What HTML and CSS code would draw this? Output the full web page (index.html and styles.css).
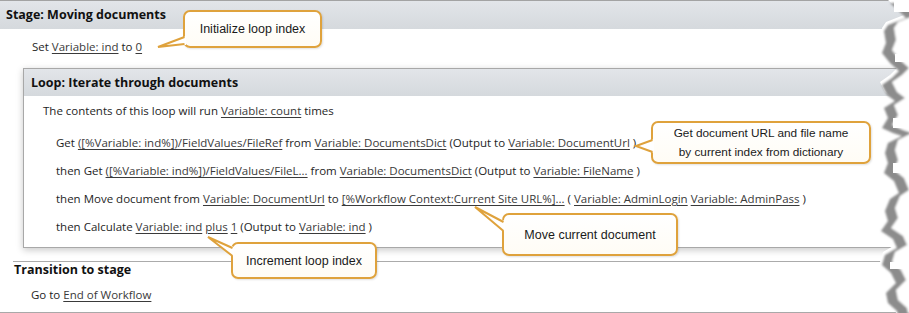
FILE: index.html
```html
<!DOCTYPE html>
<html lang="en">
<head>
    <meta charset="UTF-8">
    <title>Stage: Moving documents</title>
    <link rel="stylesheet" href="styles.css">
</head>
<body>
    <div class="sheet">
        <div class="stage">
            <div class="stage-head">Stage: Moving documents</div>
            <div class="set-row">Set <span class="ref">Variable: ind</span> to <span class="ref">0</span></div>

            <div class="loop">
                <div class="loop-head">Loop: Iterate through documents</div>
                <div class="loop-body">
                    <div class="loop-note">The contents of this loop will run <span class="ref">Variable: count</span> times</div>
                    <div class="step">Get <span class="ref">([%Variable: ind%])/FieldValues/FileRef</span> from <span class="ref">Variable: DocumentsDict</span> (Output to <span class="ref">Variable: DocumentUrl</span> )</div>
                    <div class="step">then Get <span class="ref">([%Variable: ind%])/FieldValues/FileL...</span> from <span class="ref">Variable: DocumentsDict</span> (Output to <span class="ref">Variable: FileName</span> )</div>
                    <div class="step">then Move document from <span class="ref">Variable: DocumentUrl</span> to <span class="ref">[%Workflow Context:Current Site URL%]...</span> ( <span class="ref">Variable: AdminLogin</span> <span class="ref">Variable: AdminPass</span> )</div>
                    <div class="step">then Calculate <span class="ref">Variable: ind</span> <span class="ref">plus</span> <span class="ref">1</span> (Output to <span class="ref">Variable: ind</span> )</div>
                </div>
            </div>

            <div class="transition">
                <div class="trans-head">Transition to stage</div>
                <div class="go-row">Go to <span class="ref">End of Workflow</span></div>
            </div>
        </div>

        <div class="callout callout-init">Initialize loop index</div>
        <div class="callout callout-get">Get document URL and file name<br>by current index from dictionary</div>
        <div class="callout callout-move">Move current document</div>
        <div class="callout callout-inc">Increment loop index</div>

        <!-- callout tails, drawn over the callout borders -->
        <svg class="tails" width="909" height="313" viewBox="0 0 909 313">
            <g fill="#fff" stroke="none">
                <polygon points="186,36 158,47 186,45"/>
                <polygon points="654,139 636,146 654,153"/>
                <polygon points="505,221 475,207 505,232"/>
                <polygon points="234,247 208,237 234,257"/>
            </g>
            <g fill="none" stroke="#dfa23c" stroke-width="2" stroke-linejoin="miter">
                <polyline points="184.5,37 158,47 184.5,44"/>
                <polyline points="652.5,140 636,146 652.5,152"/>
                <polyline points="503.5,222 475,207 503.5,231"/>
                <polyline points="232.5,248 208,237 232.5,256"/>
            </g>
        </svg>

        <!-- torn right edge: white cut, then a gray shadow band along it -->
        <svg class="torn" width="40" height="313" viewBox="869 0 40 313">
            <defs>
                <filter id="soft" x="-50%" y="-10%" width="200%" height="120%">
                    <feGaussianBlur stdDeviation="0.9"/>
                </filter>
                <polygon id="edge" points="888,0 897,8 904,15 886,22 882,28 884,40 880,50 888,60 897,68 890,75 880,82 885,92 893,98 882,105 886,115 880,125 891,130 900,133 886,140 883,150 886,160 882,170 892,178 897,190 888,196 883,208 886,218 879,228 891,236 895,245 883,252 880,262 889,270 894,280 884,290 886,300 895,308 896,313 940,313 940,0"/>
            </defs>
            <use href="#edge" fill="#fff"/>
            <g filter="url(#soft)">
                <use href="#edge" fill="#8c8c8c" transform="translate(2,3)"/>
                <use href="#edge" fill="#fff" transform="translate(12,0)"/>
            </g>
            <g fill="#fff">
                <rect x="894" y="0" width="15" height="12"/>
                <rect x="895" y="54" width="14" height="8"/>
                <rect x="893" y="118" width="16" height="10"/>
                <rect x="893" y="163" width="16" height="10"/>
                <rect x="890" y="262" width="19" height="7"/>
            </g>
        </svg>
    </div>
</body>
</html>
```

FILE: styles.css
```css
body {
    margin: 0;
    background: #fff;
    font-family: "Open Sans", "Noto Sans", sans-serif;
    font-size: 11.5px;
    color: #1e1e1e;
}
.sheet {
    position: relative;
    width: 909px;
    height: 313px;
    overflow: hidden;
}
.ref {
    color: #3a3a3a;
    text-decoration: underline;
    text-underline-offset: 2px;
}
.stage {
    border-top: 1px solid #a3a3a3;
    border-bottom: 1px solid #a9a9a9;
}
.stage-head {
    height: 28px;
    line-height: 28px;
    padding-left: 6px;
    font-weight: 700;
    font-size: 12.5px;
    color: #111;
    background: linear-gradient(#e2e5e9, #d5d9dd);
}
.set-row {
    height: 16px;
    line-height: 16px;
    padding: 10px 0 0 32px;
}
.loop {
    margin: 13px 0 0 23px;
    border: 1px solid #a8a8a8;
    border-right: none;
    box-shadow: 0 2px 7px rgba(0, 0, 0, 0.22);
    background: #fff;
}
.loop-head {
    height: 27px;
    line-height: 28px;
    padding-left: 7px;
    font-weight: 700;
    font-size: 12.5px;
    color: #111;
    background: linear-gradient(#e2e5e9, #d5d9dd);
}
.loop-body {
    padding: 7px 0 6px;
}
.loop-note {
    height: 16px;
    line-height: 16px;
    padding-left: 19px;
    margin-bottom: 10px;
}
.step {
    height: 28px;
    line-height: 28px;
    padding-left: 32px;
    white-space: nowrap;
}
.transition {
    margin: 13px 0 0 13px;
    border-top: 1px solid #ababab;
}
.trans-head {
    height: 16px;
    line-height: 16px;
    padding-left: 1px;
    font-weight: 700;
    font-size: 12.5px;
    color: #111;
}
.go-row {
    height: 16px;
    line-height: 16px;
    padding: 9px 0 9px 18px;
}
.callout {
    position: absolute;
    box-sizing: border-box;
    border: 2px solid #dfa23c;
    border-radius: 7px;
    background: linear-gradient(#fff, #fffcf5);
    box-shadow: 1px 1px 2px rgba(0, 0, 0, 0.12);
    font-family: "Liberation Sans", Arial, sans-serif;
    font-size: 12.5px;
    color: #1a1a1a;
    text-align: center;
    display: flex;
    align-items: center;
    justify-content: center;
}
.callout-init {
    left: 183px;
    top: 10px;
    width: 139px;
    height: 38px;
}
.callout-get {
    left: 651px;
    top: 121px;
    width: 220px;
    height: 43px;
    font-size: 11.8px;
    line-height: 19px;
}
.callout-move {
    left: 502px;
    top: 213px;
    width: 176px;
    height: 43px;
}
.callout-inc {
    left: 231px;
    top: 242px;
    width: 146px;
    height: 37px;
}
.tails {
    position: absolute;
    left: 0;
    top: 0;
    pointer-events: none;
}
.torn {
    position: absolute;
    right: 0;
    top: 0;
    pointer-events: none;
}
```
